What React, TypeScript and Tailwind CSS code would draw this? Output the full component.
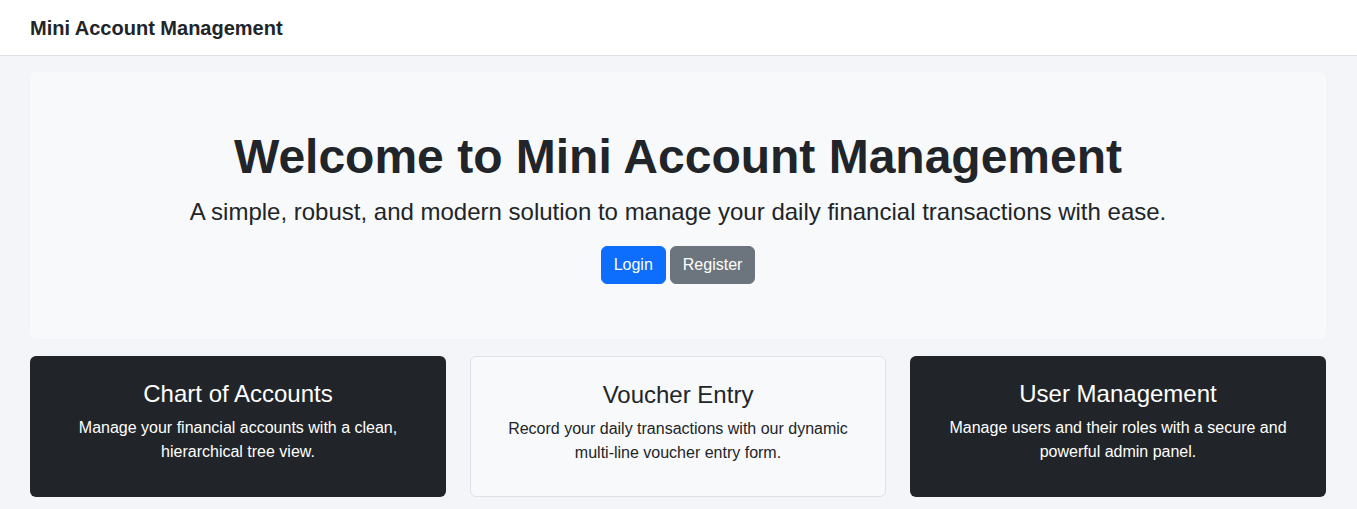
const cards = [
  {
    title: "Chart of Accounts",
    text: "Manage your financial accounts with a clean, hierarchical tree view.",
    dark: true,
  },
  {
    title: "Voucher Entry",
    text: "Record your daily transactions with our dynamic multi-line voucher entry form.",
    dark: false,
  },
  {
    title: "User Management",
    text: "Manage users and their roles with a secure and powerful admin panel.",
    dark: true,
  },
];

export default function App() {
  return (
    <div className="min-h-[509px] bg-[#f4f5f8] font-['Liberation_Sans',Arial,sans-serif] text-[#212529]">
      {/* Navbar */}
      <nav className="h-[56px] bg-white border-b border-[#dee2e6] flex items-center px-[30px]">
        <span className="text-[20px] font-bold leading-none text-[#212529]">
          Mini Account Management
        </span>
      </nav>

      <main className="px-[30px] pr-[31px] pt-4">
        {/* Hero */}
        <section className="bg-[#f8f9fa] rounded-md pt-[56px] pb-[55px] text-center">
          <h1 className="text-[48px] font-bold leading-[58px] mb-2">
            Welcome to Mini Account Management
          </h1>
          <p className="text-[24px] leading-[36px] mb-[16px]">
            A simple, robust, and modern solution to manage your daily financial transactions with ease.
          </p>
          <div className="flex justify-center gap-1">
            <button className="bg-[#0d6efd] text-white text-base leading-6 px-3 py-[6px] rounded-md border border-[#0d6efd]">
              Login
            </button>
            <button className="bg-[#6c757d] text-white text-base leading-6 px-3 py-[6px] rounded-md border border-[#6c757d]">
              Register
            </button>
          </div>
        </section>

        {/* Feature cards */}
        <div className="grid grid-cols-3 gap-6 mt-[17px]">
          {cards.map((c) => (
            <div
              key={c.title}
              className={
                c.dark
                  ? "bg-[#212529] text-white rounded-md h-[141px] pt-6 px-6 text-center"
                  : "bg-[#f8f9fa] text-[#212529] rounded-md h-[141px] pt-6 px-6 text-center border border-[#dee2e6]"
              }
            >
              <h4 className="text-2xl leading-[1.2] mb-[7px]">{c.title}</h4>
              <p className="text-base leading-6 max-w-[360px] mx-auto">{c.text}</p>
            </div>
          ))}
        </div>
      </main>
    </div>
  );
}
